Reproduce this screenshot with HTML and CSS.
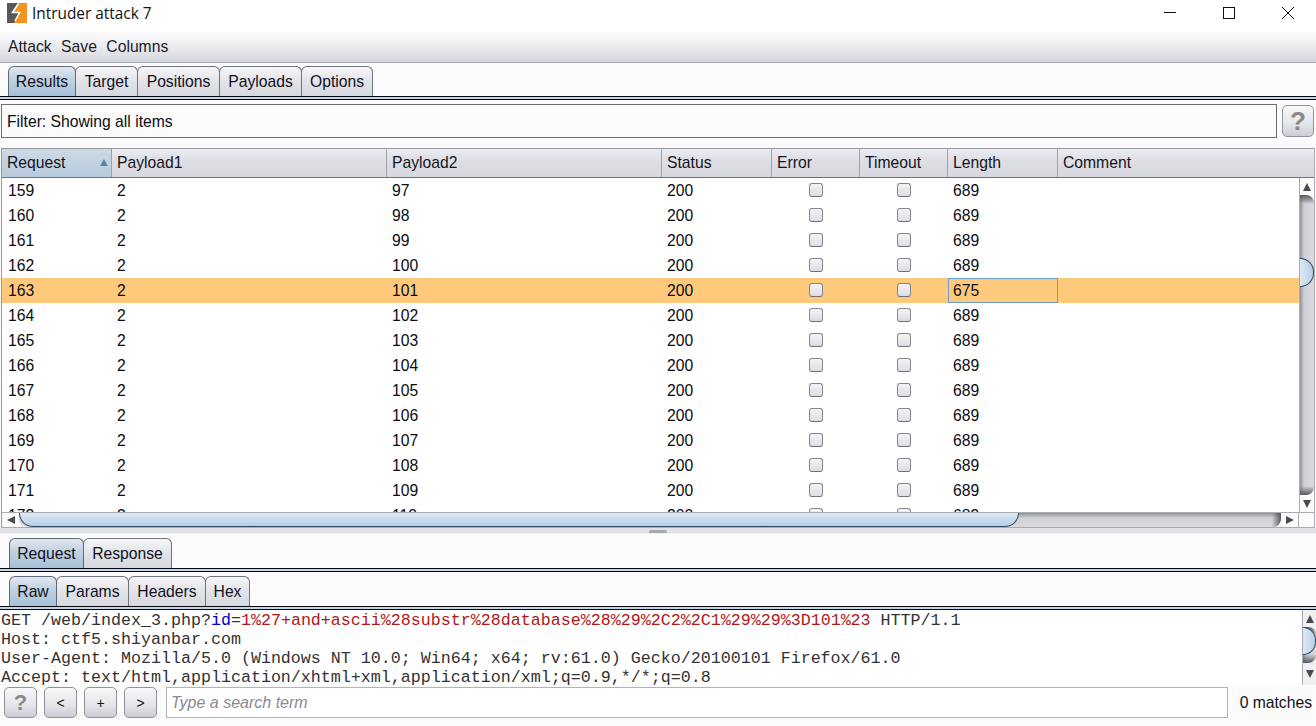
FILE: index.html
```html
<!DOCTYPE html>
<html lang="en">
<head>
<meta charset="utf-8">
<title>Intruder attack 7</title>
<link rel="stylesheet" href="styles.css">
</head>
<body>
<div class="window">
  <header class="titlebar">
    <svg class="logo" width="20" height="20" viewBox="0 0 20 20">
      <rect x="0" y="0" width="20" height="20" fill="#f7941d"/>
      <path d="M0 0H11L5 10H12L7 20H0Z" fill="#58585a"/>
      <path d="M11.5 0.5L5.5 9.5H12.5L8 18" fill="none" stroke="#fff" stroke-width="1.6"/>
    </svg>
    <span class="title-text">Intruder attack 7</span>
    <div class="win-controls">
      <svg width="14" height="14" viewBox="0 0 14 14"><path d="M1 6.5H13" stroke="#111" fill="none"/></svg>
      <svg width="14" height="14" viewBox="0 0 14 14"><rect x="1.5" y="1.5" width="11" height="11" stroke="#111" fill="none"/></svg>
      <svg width="14" height="14" viewBox="0 0 14 14"><path d="M1 1L13 13M13 1L1 13" stroke="#111" fill="none"/></svg>
    </div>
  </header>
  <nav class="menubar"><span>Attack</span><span>Save</span><span>Columns</span></nav>

  <div class="tabstrip main-tabs">
    <span class="tab active t-results">Results</span>
    <span class="tab t-target">Target</span>
    <span class="tab t-positions">Positions</span>
    <span class="tab t-payloads">Payloads</span>
    <span class="tab t-options">Options</span>
  </div>
  <div class="tabline"></div>

  <div class="filter-row">
    <div class="filter">Filter: Showing all items</div>
    <button class="help big">?</button>
  </div>

  <section class="results">
    <div class="row head">
      <div class="cell sorted">Request<i class="sort"></i></div>
      <div class="cell">Payload1</div>
      <div class="cell">Payload2</div>
      <div class="cell">Status</div>
      <div class="cell">Error</div>
      <div class="cell">Timeout</div>
      <div class="cell">Length</div>
      <div class="cell last">Comment</div>
    </div>
    <div class="table-mid">
      <div class="rows">
        <div class="row"><div class="cell">159</div><div class="cell">2</div><div class="cell">97</div><div class="cell">200</div><div class="cell c"><i class="check"></i></div><div class="cell c"><i class="check"></i></div><div class="cell">689</div><div class="cell"></div></div>
        <div class="row"><div class="cell">160</div><div class="cell">2</div><div class="cell">98</div><div class="cell">200</div><div class="cell c"><i class="check"></i></div><div class="cell c"><i class="check"></i></div><div class="cell">689</div><div class="cell"></div></div>
        <div class="row"><div class="cell">161</div><div class="cell">2</div><div class="cell">99</div><div class="cell">200</div><div class="cell c"><i class="check"></i></div><div class="cell c"><i class="check"></i></div><div class="cell">689</div><div class="cell"></div></div>
        <div class="row"><div class="cell">162</div><div class="cell">2</div><div class="cell">100</div><div class="cell">200</div><div class="cell c"><i class="check"></i></div><div class="cell c"><i class="check"></i></div><div class="cell">689</div><div class="cell"></div></div>
        <div class="row selected"><div class="cell">163</div><div class="cell">2</div><div class="cell">101</div><div class="cell">200</div><div class="cell c"><i class="check"></i></div><div class="cell c"><i class="check"></i></div><div class="cell focus">675</div><div class="cell"></div></div>
        <div class="row"><div class="cell">164</div><div class="cell">2</div><div class="cell">102</div><div class="cell">200</div><div class="cell c"><i class="check"></i></div><div class="cell c"><i class="check"></i></div><div class="cell">689</div><div class="cell"></div></div>
        <div class="row"><div class="cell">165</div><div class="cell">2</div><div class="cell">103</div><div class="cell">200</div><div class="cell c"><i class="check"></i></div><div class="cell c"><i class="check"></i></div><div class="cell">689</div><div class="cell"></div></div>
        <div class="row"><div class="cell">166</div><div class="cell">2</div><div class="cell">104</div><div class="cell">200</div><div class="cell c"><i class="check"></i></div><div class="cell c"><i class="check"></i></div><div class="cell">689</div><div class="cell"></div></div>
        <div class="row"><div class="cell">167</div><div class="cell">2</div><div class="cell">105</div><div class="cell">200</div><div class="cell c"><i class="check"></i></div><div class="cell c"><i class="check"></i></div><div class="cell">689</div><div class="cell"></div></div>
        <div class="row"><div class="cell">168</div><div class="cell">2</div><div class="cell">106</div><div class="cell">200</div><div class="cell c"><i class="check"></i></div><div class="cell c"><i class="check"></i></div><div class="cell">689</div><div class="cell"></div></div>
        <div class="row"><div class="cell">169</div><div class="cell">2</div><div class="cell">107</div><div class="cell">200</div><div class="cell c"><i class="check"></i></div><div class="cell c"><i class="check"></i></div><div class="cell">689</div><div class="cell"></div></div>
        <div class="row"><div class="cell">170</div><div class="cell">2</div><div class="cell">108</div><div class="cell">200</div><div class="cell c"><i class="check"></i></div><div class="cell c"><i class="check"></i></div><div class="cell">689</div><div class="cell"></div></div>
        <div class="row"><div class="cell">171</div><div class="cell">2</div><div class="cell">109</div><div class="cell">200</div><div class="cell c"><i class="check"></i></div><div class="cell c"><i class="check"></i></div><div class="cell">689</div><div class="cell"></div></div>
        <div class="row"><div class="cell">172</div><div class="cell">2</div><div class="cell">110</div><div class="cell">200</div><div class="cell c"><i class="check"></i></div><div class="cell c"><i class="check"></i></div><div class="cell">689</div><div class="cell"></div></div>
      </div>
      <div class="vscroll table-v">
        <div class="arrow-box"><i class="tri up"></i></div>
        <div class="vtrack"><i class="vthumb"></i></div>
        <div class="arrow-box"><i class="tri down"></i></div>
      </div>
    </div>
    <div class="hscroll">
      <div class="harrow"><i class="tri left"></i></div>
      <div class="htrack"><i class="hthumb"></i></div>
      <div class="harrow"><i class="tri right"></i></div>
      <div class="corner"></div>
    </div>
  </section>

  <div class="splitter"><i class="grip"></i></div>

  <div class="tabstrip sub-tabs">
    <span class="tab active t-request">Request</span>
    <span class="tab t-response">Response</span>
  </div>
  <div class="tabline"></div>
  <div class="tabstrip third-tabs">
    <span class="tab active t-raw">Raw</span>
    <span class="tab t-params">Params</span>
    <span class="tab t-headers">Headers</span>
    <span class="tab t-hex">Hex</span>
  </div>
  <div class="tabline"></div>

  <div class="editor">
    <pre class="code">GET /web/index_3.php?<span class="blue">id</span>=<span class="red">1%27+and+ascii%28substr%28database%28%29%2C2%2C1%29%29%3D101%23</span> HTTP/1.1
Host: ctf5.shiyanbar.com
User-Agent: Mozilla/5.0 (Windows NT 10.0; Win64; x64; rv:61.0) Gecko/20100101 Firefox/61.0
Accept: text/html,application/xhtml+xml,application/xml;q=0.9,*/*;q=0.8</pre>
    <div class="vscroll editor-v">
      <div class="arrow-box"><i class="tri up"></i></div>
      <div class="vtrack"><i class="vthumb"></i></div>
      <div class="arrow-box tall"><i class="tri down"></i></div>
    </div>
  </div>

  <footer class="searchbar">
    <button class="help small">?</button>
    <button class="nav">&lt;</button>
    <button class="nav">+</button>
    <button class="nav">&gt;</button>
    <div class="search">Type a search term</div>
    <span class="matches">0 matches</span>
  </footer>
</div>
</body>
</html>
```
FILE: styles.css
```css
* { box-sizing: border-box; }
html, body { margin: 0; padding: 0; }
body {
  width: 1316px;
  height: 726px;
  overflow: hidden;
  background: #fbfbfb;
  font-family: "Liberation Sans", Arial, sans-serif;
  font-size: 15.7px;
  color: #0c0c14;
}
.window { display: flex; flex-direction: column; height: 726px; }

/* Title bar */
.titlebar {
  height: 32px;
  background: #fff;
  display: flex;
  align-items: center;
  padding-left: 7px;
  flex: none;
}
.logo { margin-top: -6px; }
.title-text {
  font-family: "Open Sans", "Noto Sans", sans-serif;
  font-size: 15.4px;
  margin-left: 5px;
  margin-top: -6px;
  color: #111;
}
.win-controls {
  margin-left: auto;
  display: flex;
  gap: 45px;
  padding-right: 21px;
  margin-top: -6px;
}

/* Menu */
.menubar {
  height: 31px;
  flex: none;
  display: flex;
  gap: 9.5px;
  align-items: center;
  padding: 0 0 0 8px;
  background: linear-gradient(#fbfbfc, #f3f4f6 25%, #d5d7dd);
  border-bottom: 1px solid #a6a9b1;
  color: #1c1c28;
}

/* Tabs */
.tabstrip {
  display: flex;
  align-items: flex-end;
  flex: none;
  padding-left: 8px;
  background: #fbfbfb;
}
.main-tabs { height: 33px; }
.sub-tabs { height: 30px; margin-top: 2px; padding-left: 9px; }
.third-tabs { height: 34px; padding-left: 9px; }
.tab {
  height: 30px;
  display: flex;
  align-items: center;
  justify-content: center;
  padding-top: 1px;
  margin-right: -1px;
  border: 1px solid #6e7582;
  border-bottom: none;
  border-radius: 6px 6px 0 0;
  background: linear-gradient(#f6f6f8, #e2e3e8 50%, #d6d8df);
  color: #10101c;
}
.tab.active {
  background: linear-gradient(#e4e8ee, #c2d2e0 40%, #a6c0d8);
  border-color: #5e6a7a;
  position: relative;
  z-index: 1;
}
.t-results { width: 68px; }
.t-target { width: 63px; }
.t-positions { width: 83px; }
.t-payloads { width: 83px; }
.t-options { width: 72px; }
.t-request { width: 75px; }
.t-response { width: 89px; }
.t-raw { width: 48px; }
.t-params { width: 73px; }
.t-headers { width: 78px; }
.t-hex { width: 45px; }
.tabline {
  height: 4px;
  flex: none;
  background: #c4d5e8;
  border-top: 1px solid #05070f;
  border-bottom: 1px solid #05070f;
}

/* Filter */
.filter-row {
  display: flex;
  flex: none;
  gap: 5px;
  padding: 4px 2px 0 1px;
  height: 48px;
}
.filter {
  flex: 1;
  height: 34px;
  border: 1px solid #6e6e6e;
  background: #fbfbfb;
  display: flex;
  align-items: center;
  padding: 2px 0 0 5px;
}
button {
  font-family: "Liberation Sans", Arial, sans-serif;
  padding: 0;
  border: 1px solid #8f939b;
  border-radius: 5px;
  background: linear-gradient(#f8f8fa, #e6e7ea 55%, #ccced5);
}
.help { color: #8a8a8a; font-weight: bold; }
.big { width: 32px; height: 32px; font-size: 26px; margin-top: 1px; line-height: 1; }

/* Results table */
.results {
  flex: none;
  margin-left: 1px;
  width: 1314px;
  height: 380px;
  display: flex;
  flex-direction: column;
  border: 1px solid #94979f;
  border-bottom: 1px solid #a9acb3;
  border-right: 1px solid #a9acb3;
}
.row {
  display: grid;
  grid-template-columns: 110px 275px 275px 110px 88px 88px 110px 1fr;
  height: 25px;
  background: #fff;
  flex: none;
}
.cell {
  display: flex;
  align-items: center;
  padding-left: 5px;
  min-width: 0;
  color: #0c0c14;
  white-space: nowrap;
}
.rows .cell:first-child { padding-left: 6px; }
.cell.c { justify-content: center; padding-left: 0; }
.row.head {
  height: 29px;
  background: linear-gradient(#eceef1, #e0e1e6 30%, #d6d8df);
  border-bottom: 1px solid #6c7280;
}
.head .cell {
  border-right: 1px solid #9ea2ab;
  color: #14141e;
}
.head .cell.last { border-right: none; }
.head .sorted {
  background: linear-gradient(#cdd9e4, #b7cbdd);
  position: relative;
}
.sort {
  position: absolute;
  right: 3px;
  top: 10px;
  border-left: 4px solid transparent;
  border-right: 4px solid transparent;
  border-bottom: 7px solid #5b83ad;
}
.table-mid { display: flex; height: 334px; flex: none; }
.rows { flex: 1; overflow: hidden; background: #fff; }
.row.selected { background: #ffc97c; }
.focus { border: 1px solid #6d9ed0; padding-left: 4px; }
.check {
  width: 14px;
  height: 14px;
  margin-top: -1px;
  border: 1px solid #85888f;
  border-bottom-color: #6d7078;
  border-radius: 3px;
  background: linear-gradient(#f4f4f6, #dcdde3);
  display: block;
}

/* Scrollbars */
.vscroll {
  width: 15px;
  flex: none;
  display: flex;
  flex-direction: column;
  background: #fbfbfb;
  border-left: 1px solid #a9acb3;
}
.arrow-box {
  height: 17px;
  flex: none;
  display: flex;
  align-items: center;
  justify-content: center;
}
.arrow-box.tall { height: 22px; }
.vtrack {
  flex: 1;
  position: relative;
  overflow: hidden;
  background:
    linear-gradient(#55585f, rgba(85, 88, 95, 0) 9px),
    linear-gradient(0deg, #55585f, rgba(85, 88, 95, 0) 9px),
    linear-gradient(90deg, #8f929a, #cfd1d6 30%, #d8dadf);
  border-radius: 0 8px 8px 0;
}
.vthumb {
  position: absolute;
  left: 0;
  right: 0;
  border: 1px solid #2f4a64;
  border-left: none;
  border-radius: 0 14px 14px 0;
  background: linear-gradient(90deg, #dfe9f2, #b6d0e6);
}
.table-v .vthumb { top: 63px; height: 29px; }
.editor-v .vthumb { top: 0; height: 28px; }
.tri { display: block; width: 0; height: 0; }
.tri.up { border-left: 4px solid transparent; border-right: 4px solid transparent; border-bottom: 8px solid #4a4a50; }
.tri.down { border-left: 4px solid transparent; border-right: 4px solid transparent; border-top: 8px solid #4a4a50; }
.tri.left { border-top: 4px solid transparent; border-bottom: 4px solid transparent; border-right: 8px solid #4a4a50; }
.tri.right { border-top: 4px solid transparent; border-bottom: 4px solid transparent; border-left: 8px solid #4a4a50; }
.hscroll {
  display: flex;
  height: 15px;
  flex: none;
  background: #fbfbfb;
  border-top: 1px solid #a9acb3;
}
.harrow {
  width: 17px;
  flex: none;
  display: flex;
  align-items: center;
  justify-content: center;
}
.htrack {
  flex: 1;
  position: relative;
  background:
    linear-gradient(270deg, #55585f, rgba(85, 88, 95, 0) 9px),
    linear-gradient(#8f929a, #cfd1d6 35%, #d8dadf);
  border-radius: 0 0 8px 8px;
}
.hthumb {
  position: absolute;
  left: 0;
  width: 1000px;
  top: 0;
  bottom: 0;
  border: 1px solid #2f4a64;
  border-top: none;
  border-radius: 0 0 14px 14px;
  background: linear-gradient(#dfe9f2, #b6d0e6);
}
.corner { width: 16px; flex: none; border-left: 1px solid #a9acb3; }

/* Splitter */
.splitter {
  height: 8px;
  flex: none;
  display: flex;
  justify-content: center;
  align-items: flex-start;
  padding-top: 2px;
  background: linear-gradient(#e0e2e6, #e0e2e6 5px, #fbfbfb 6px);
}
.grip {
  width: 18px;
  height: 3px;
  background: #a5a8af;
  border-radius: 2px 2px 0 0;
}

/* Editor */
.editor {
  display: flex;
  height: 75px;
  flex: none;
  background: #fff;
  overflow: hidden;
}
.code {
  flex: 1;
  margin: 0;
  padding: 1px 0 0 1px;
  font-family: "Liberation Mono", "Courier New", monospace;
  font-size: 16.66px;
  line-height: 19px;
  color: #333;
  overflow: hidden;
  white-space: pre;
}
.blue { color: #0000c8; }
.red { color: #b01818; }
.editor-v { width: 14px; height: 75px; background: #f0f0f2; }

/* Search bar */
.searchbar {
  flex: 1;
  display: flex;
  align-items: flex-start;
  gap: 7px;
  padding: 2px 4px 0 4px;
  background: #fbfbfb;
}
.small { width: 33px; height: 31px; font-size: 22px; }
.nav { width: 33px; height: 31px; font-size: 14px; color: #111; }
.search {
  flex: 1;
  height: 31px;
  border: 1px solid #b4b4b4;
  background: #fff;
  color: #8a8a90;
  font-size: 16px;
  font-style: italic;
  display: flex;
  align-items: center;
  padding-left: 4px;
  margin-left: 2px;
}
.matches { line-height: 31px; margin-left: 5px; color: #111; }
```
